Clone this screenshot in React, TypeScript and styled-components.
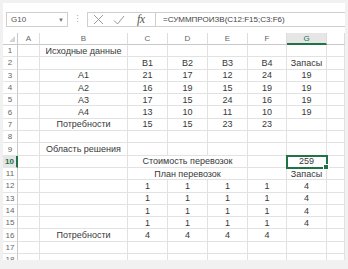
import React from "react";
import styled, { createGlobalStyle } from "styled-components";

const GlobalStyle = createGlobalStyle`
  html, body {
    margin: 0;
    padding: 0;
    background: #f1f1f1;
  }
  * {
    box-sizing: border-box;
  }
`;

const Window = styled.div`
  margin: 3px 0 0 3px;
  width: 342px;
  height: 257px;
  background: #ffffff;
  overflow: hidden;
  font-family: "Liberation Sans", Arial, sans-serif;
  display: flex;
  flex-direction: column;
`;

const FormulaBar = styled.div`
  display: flex;
  align-items: center;
  height: 15px;
  margin-top: 9px;
  padding-left: 3px;
`;

const NameBox = styled.div`
  width: 62px;
  height: 15px;
  border: 1px solid #cfcfcf;
  display: flex;
  align-items: center;
  justify-content: space-between;
  padding: 0 3px 0 4px;
  font-size: 8px;
  color: #555;
`;

const DropArrow = styled.span`
  font-size: 6px;
  color: #777;
`;

const Dots = styled.div`
  width: 19px;
  text-align: center;
  color: #aaa;
  font-size: 9px;
  line-height: 1;
`;

const FxBox = styled.div`
  flex: 1;
  height: 15px;
  border: 1px solid #cfcfcf;
  border-right: none;
  display: flex;
  align-items: center;
`;

const FxButtons = styled.div`
  width: 67px;
  height: 100%;
  display: flex;
  align-items: center;
  gap: 9px;
  padding-left: 5px;
`;

const FxLabel = styled.span`
  margin-left: 3px;
  font-family: "Liberation Serif", "Times New Roman", serif;
  font-style: italic;
  font-size: 12px;
  color: #555;
  letter-spacing: -0.5px;
`;

const FormulaText = styled.div`
  flex: 1;
  height: 100%;
  border-left: 1px solid #cfcfcf;
  padding-left: 7px;
  display: flex;
  align-items: center;
  font-size: 8px;
  color: #444;
  white-space: nowrap;
`;

const Sheet = styled.div`
  margin-top: 6px;
  display: grid;
  grid-template-columns: 15px 22px 88px 40px 40px 40px 39px 40px 1fr;
  grid-template-rows: 12px repeat(18, 12.3px);
`;

const Corner = styled.div`
  border-right: 1px solid #c9c9c9;
  border-bottom: 1px solid #c9c9c9;
  position: relative;
  &::after {
    content: "";
    position: absolute;
    right: 2px;
    bottom: 2px;
    border-left: 6px solid transparent;
    border-bottom: 6px solid #d4d4d4;
  }
`;

const ColHead = styled.div<{ $active?: boolean }>`
  display: flex;
  align-items: center;
  justify-content: center;
  font-size: 8px;
  color: ${(p) => (p.$active ? "#217346" : "#666")};
  background: ${(p) => (p.$active ? "#e6e6e6" : "#fff")};
  border-right: 1px solid #dcdcdc;
  border-bottom: ${(p) => (p.$active ? "2px solid #217346" : "1px solid #c9c9c9")};
`;

const RowHead = styled.div<{ $active?: boolean }>`
  display: flex;
  align-items: center;
  justify-content: center;
  font-size: 8px;
  font-weight: ${(p) => (p.$active ? 700 : 400)};
  color: ${(p) => (p.$active ? "#217346" : "#666")};
  background: ${(p) => (p.$active ? "#e6e6e6" : "#fff")};
  border-bottom: 1px solid #e4e4e4;
  border-right: ${(p) => (p.$active ? "2px solid #217346" : "1px solid #c9c9c9")};
`;

const Cell = styled.div<{ $span?: number; $selected?: boolean }>`
  grid-column: span ${(p) => p.$span ?? 1};
  display: flex;
  align-items: center;
  justify-content: center;
  font-size: 9px;
  color: #383838;
  white-space: nowrap;
  border-right: 1px solid #e2e2e2;
  border-bottom: 1px solid #e2e2e2;
  position: relative;
  ${(p) =>
    p.$selected &&
    `
    z-index: 1;
    outline: 2px solid #217346;
    outline-offset: -1px;
    &::after {
      content: "";
      position: absolute;
      right: -3px;
      bottom: -3px;
      width: 4px;
      height: 4px;
      background: #217346;
      border: 1px solid #fff;
    }
  `}
`;

type C = { v?: string; span?: number; sel?: boolean };

const row = (...vals: (string | C)[]): C[] =>
  vals.map((x) => (typeof x === "string" ? { v: x } : x));

const blank = row("", "", "", "", "", "", "", "");

const data: C[][] = [
  row("", "Исходные данные", "", "", "", "", "", ""),
  row("", "", "B1", "B2", "B3", "B4", "Запасы", ""),
  row("", "A1", "21", "17", "12", "24", "19", ""),
  row("", "A2", "16", "19", "15", "19", "19", ""),
  row("", "A3", "17", "15", "24", "16", "19", ""),
  row("", "A4", "13", "10", "11", "10", "19", ""),
  row("", "Потребности", "15", "15", "23", "23", "", ""),
  blank,
  row("", "Область решения", "", "", "", "", "", ""),
  row("", "", { v: "Стоимость перевозок", span: 3 }, "", { v: "259", sel: true }, ""),
  row("", "", { v: "План перевозок", span: 3 }, "", "Запасы", ""),
  row("", "", "1", "1", "1", "1", "4", ""),
  row("", "", "1", "1", "1", "1", "4", ""),
  row("", "", "1", "1", "1", "1", "4", ""),
  row("", "", "1", "1", "1", "1", "4", ""),
  row("", "Потребности", "4", "4", "4", "4", "", ""),
  blank,
  blank,
];

const cols = ["A", "B", "C", "D", "E", "F", "G", ""];

const XIcon = () => (
  <svg width="11" height="11" viewBox="0 0 11 11">
    <path d="M1 1 L10 10 M10 1 L1 10" stroke="#9a9a9a" strokeWidth="1" fill="none" />
  </svg>
);

const CheckIcon = () => (
  <svg width="12" height="10" viewBox="0 0 12 10">
    <path d="M1 5.5 L4.5 9 L11 1" stroke="#9a9a9a" strokeWidth="1" fill="none" />
  </svg>
);

export default function App() {
  return (
    <>
      <GlobalStyle />
      <Window>
        <FormulaBar>
          <NameBox>
            G10
            <DropArrow>▼</DropArrow>
          </NameBox>
          <Dots>⋮</Dots>
          <FxBox>
            <FxButtons>
              <XIcon />
              <CheckIcon />
              <FxLabel>fx</FxLabel>
            </FxButtons>
            <FormulaText>=СУММПРОИЗВ(C12:F15;C3:F6)</FormulaText>
          </FxBox>
        </FormulaBar>
        <Sheet>
          <Corner />
          {cols.map((c, i) => (
            <ColHead key={i} $active={c === "G"}>
              {c}
            </ColHead>
          ))}
          {data.map((r, ri) => (
            <React.Fragment key={ri}>
              <RowHead $active={ri === 9}>{ri + 1}</RowHead>
              {r.map((c, ci) => (
                <Cell key={ci} $span={c.span} $selected={c.sel}>
                  {c.v}
                </Cell>
              ))}
            </React.Fragment>
          ))}
        </Sheet>
      </Window>
    </>
  );
}
